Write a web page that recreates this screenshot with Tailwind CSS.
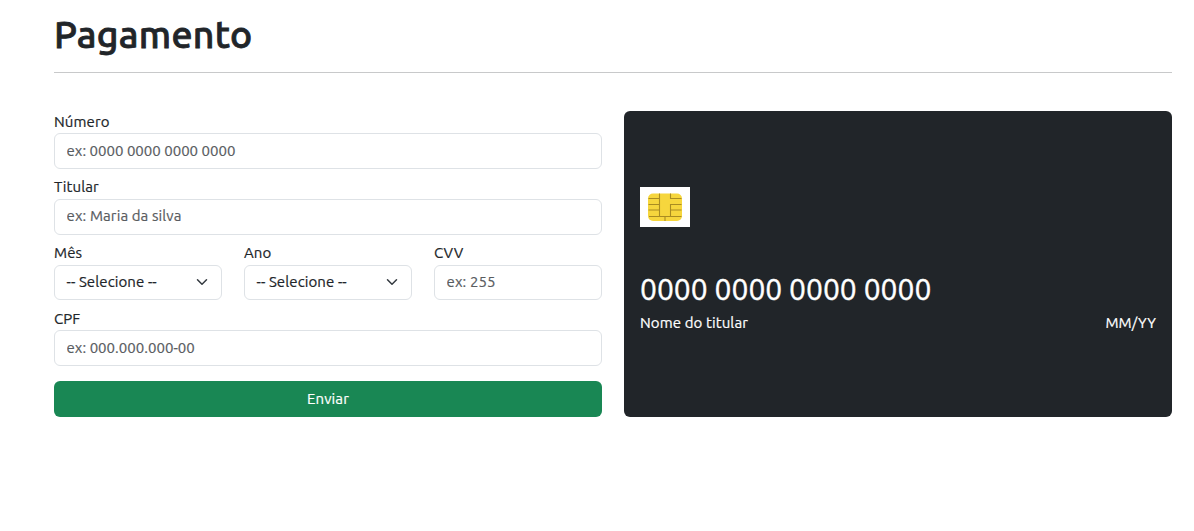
<!DOCTYPE html>
<html lang="pt-BR">
<head>
<meta charset="utf-8">
<title>Pagamento</title>
<script src="https://cdn.jsdelivr.net/npm/@tailwindcss/browser@4"></script>
</head>
<body class="bg-white text-[#212529] font-[Ubuntu,'Noto_Sans',sans-serif] text-[15px] leading-[22.5px] tracking-[0.1px] [-webkit-text-stroke-width:0.2px]">
<main class="pl-[54px] pr-[22px] pt-[12px]">
  <h1 class="text-[37.5px] leading-[45px] font-medium tracking-[0.25px] [-webkit-text-stroke:0.8px_#212529]">Pagamento</h1>
  <hr class="mt-[15px] border-t border-[#c8c9ca]">
  <div class="mt-[37.75px] grid grid-cols-2 gap-[22px]">
    <form class="flex flex-col">
      <label class="block h-[22.5px]" for="numero">Número</label>
      <input id="numero" class="mb-[7.5px] h-[35.7px] w-full rounded-[6px] border border-[#dee2e6] px-[11.5px] pb-[2px] tracking-[0.01px] placeholder:text-[#595c5f] placeholder:opacity-100" placeholder="ex: 0000 0000 0000 0000">
      <label class="block h-[22.5px]" for="titular">Titular</label>
      <input id="titular" class="mb-[7.5px] h-[35.7px] w-full rounded-[6px] border border-[#dee2e6] px-[11.5px] pb-[2px] placeholder:text-[#595c5f] placeholder:opacity-100" placeholder="ex: Maria da silva">
      <div class="grid grid-cols-3 gap-[22px]">
        <div>
          <label class="block h-[22.5px]">Mês</label>
          <div class="mb-[7.5px] flex h-[35.7px] items-center justify-between rounded-[6px] border border-[#dee2e6] pr-[13px] pl-[11.5px]">
            <span>-- Selecione --</span>
            <svg class="mb-px size-[12px]" viewBox="0 0 16 16" fill="none" stroke="#343a40" stroke-width="2" stroke-linecap="round" stroke-linejoin="round"><path d="m2 5 6 6 6-6"/></svg>
          </div>
        </div>
        <div>
          <label class="block h-[22.5px]">Ano</label>
          <div class="mb-[7.5px] flex h-[35.7px] items-center justify-between rounded-[6px] border border-[#dee2e6] pr-[13px] pl-[11.5px]">
            <span>-- Selecione --</span>
            <svg class="mb-px size-[12px]" viewBox="0 0 16 16" fill="none" stroke="#343a40" stroke-width="2" stroke-linecap="round" stroke-linejoin="round"><path d="m2 5 6 6 6-6"/></svg>
          </div>
        </div>
        <div>
          <label class="block h-[22.5px]" for="cvv">CVV</label>
          <input id="cvv" class="mb-[7.5px] block h-[35.7px] w-full rounded-[6px] border border-[#dee2e6] px-[11.5px] pb-[2px] placeholder:text-[#595c5f] placeholder:opacity-100" placeholder="ex: 255">
        </div>
      </div>
      <label class="block h-[22.5px]" for="cpf">CPF</label>
      <input id="cpf" class="h-[35.7px] w-full rounded-[6px] border border-[#dee2e6] px-[11.5px] pb-[2px] tracking-[0.03px] placeholder:text-[#595c5f] placeholder:opacity-100" placeholder="ex: 000.000.000-00">
      <button type="button" class="mt-[15px] h-[36px] rounded-[6px] bg-[#198754] text-white">Enviar</button>
    </form>
    <section class="flex flex-col justify-center rounded-[6px] bg-[#212529] px-4 pb-[7px] text-white">
      <svg class="h-[40px] w-[50px]" viewBox="0 0 50 40">
        <rect width="50" height="40" fill="#fff"/>
        <rect x="8" y="6.5" width="34" height="27.5" rx="5" fill="#f6d63d"/>
        <path d="M8.500 11.500H19M8.500 17.500H19M8.500 23H19M9 29.500h32.500M19.500 6.500v23M30.500 6.500v5h11M41.500 17.500h-11v12M30.500 23h11M25 29.500V34" fill="none" stroke="#a98c22" stroke-width="1.1"/>
      </svg>
      <div class="mt-[40px] text-[30px] leading-[45px] tracking-normal [-webkit-text-stroke-width:0.4px]">0000 0000 0000 0000</div>
      <div class="flex justify-between"><span>Nome do titular</span><span>MM/YY</span></div>
    </section>
  </div>
</main>
</body>
</html>
